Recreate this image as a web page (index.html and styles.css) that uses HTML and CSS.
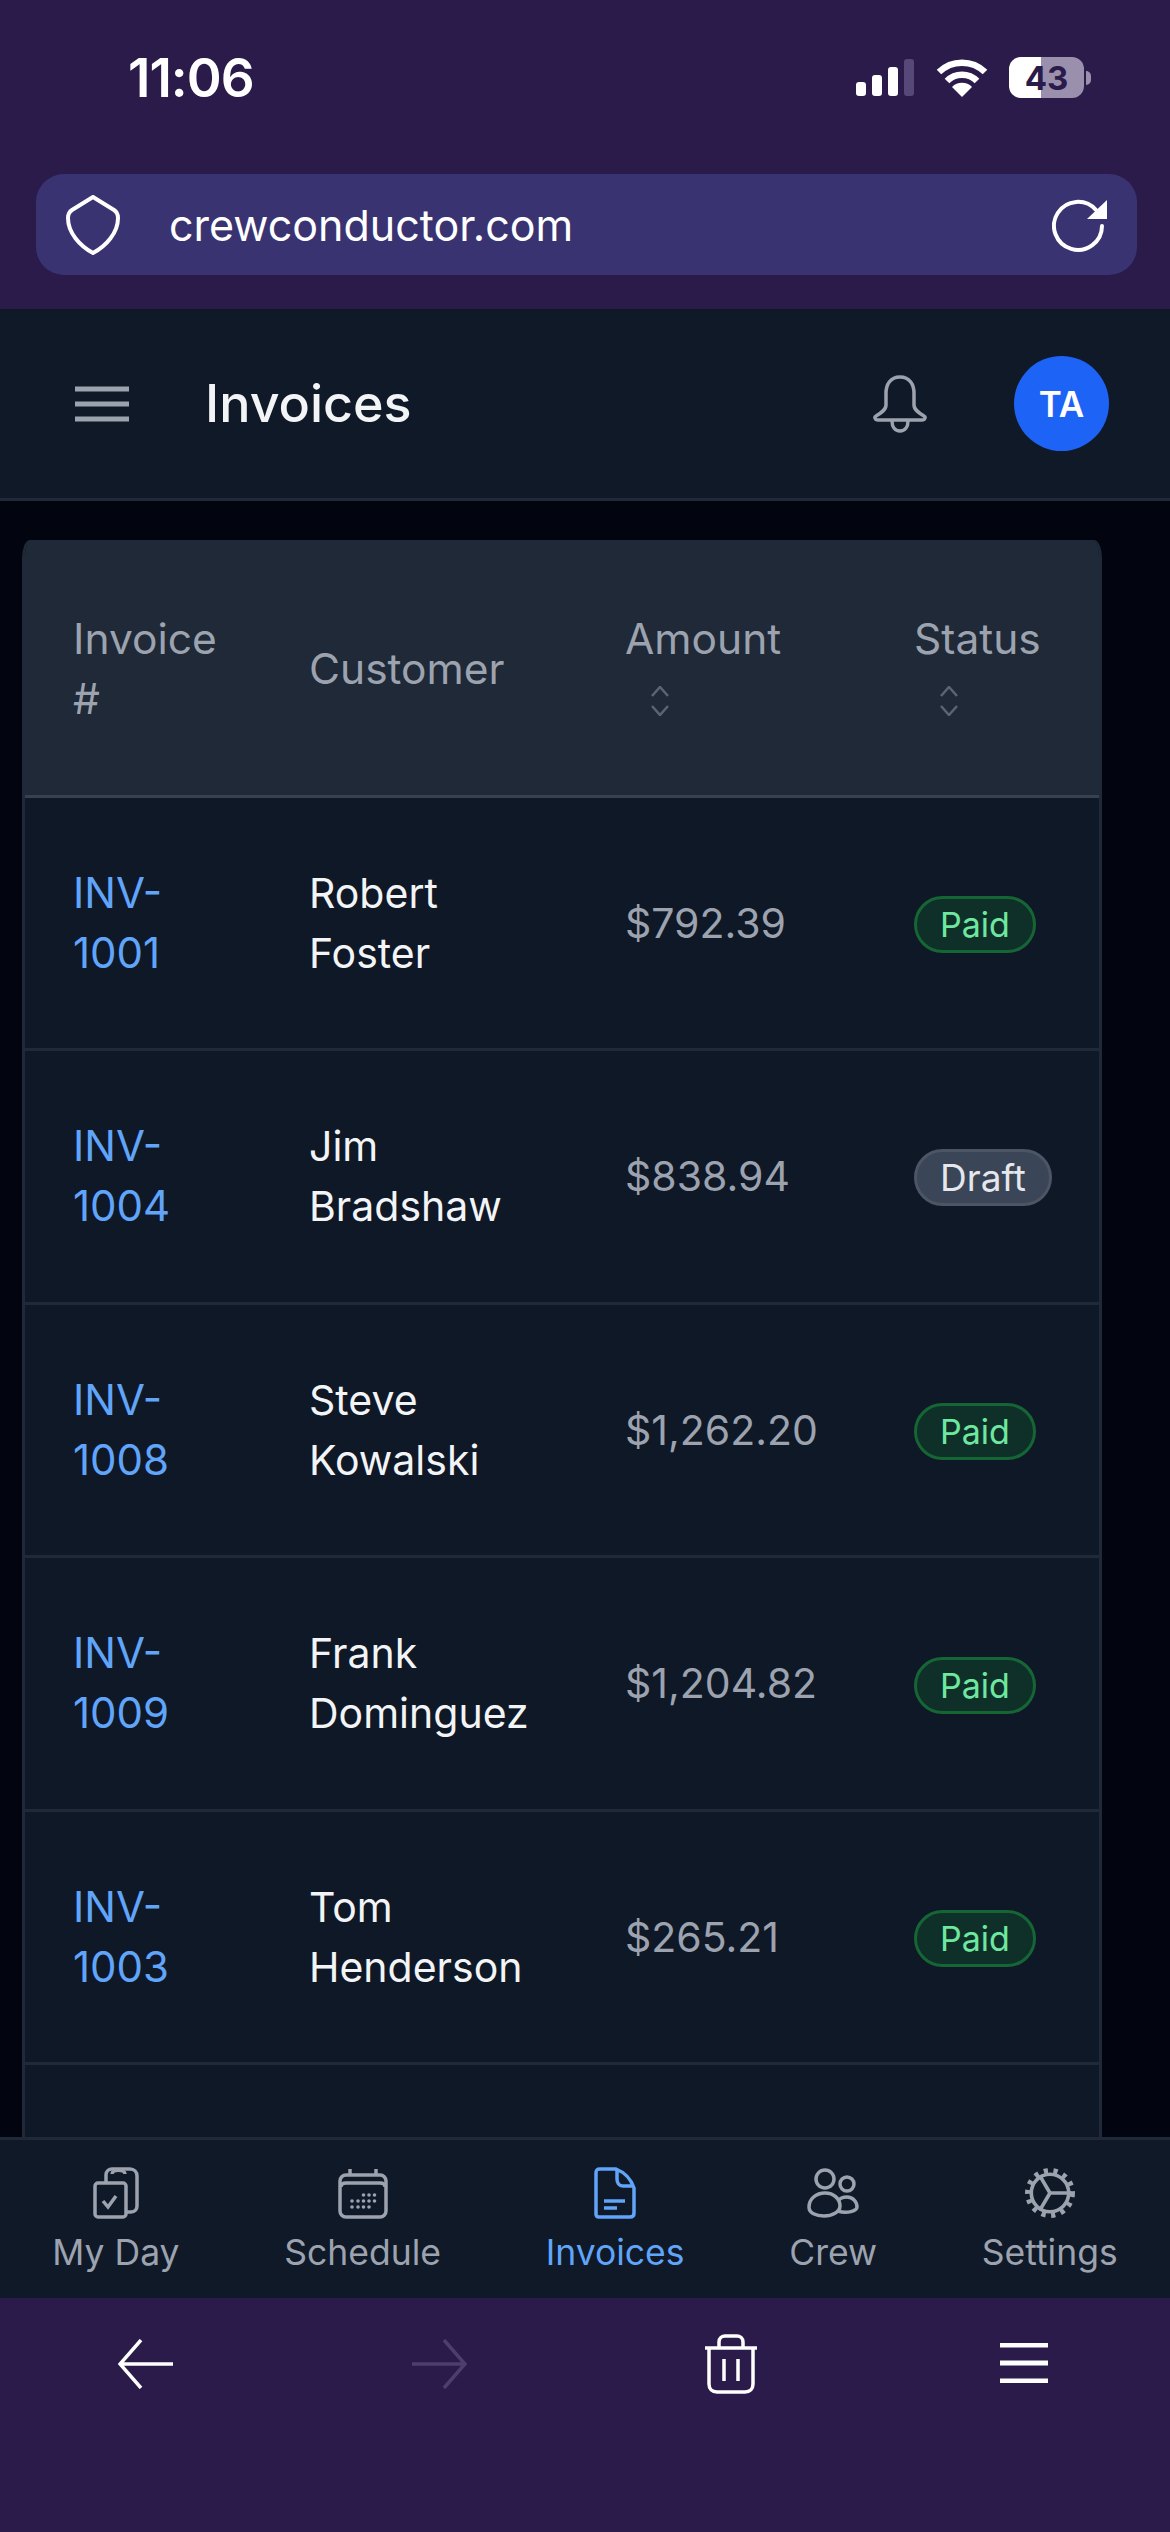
FILE: index.html
```html
<!DOCTYPE html>
<html>
<head>
    <title>Invoices</title>
    <link rel="stylesheet" href="styles.css">
</head>
<body>
    <div class="phone">
        <div class="browser-top">
            <div class="status-bar">
                <span class="time">11:06</span>
                <div class="status-icons">
                    <svg class="signal" viewBox="0 0 58 37">
                        <rect x="0" y="23" width="10" height="14" rx="3" fill="#fff"/>
                        <rect x="16" y="16" width="10" height="21" rx="3" fill="#fff"/>
                        <rect x="32" y="8" width="10" height="29" rx="3" fill="#fff"/>
                        <rect x="48" y="0" width="10" height="37" rx="3" fill="#56497a"/>
                    </svg>
                    <svg class="wifi" viewBox="0 0 52 38">
                        <path d="M3 13A33 33 0 0 1 49 13" fill="none" stroke="#fff" stroke-width="6.5"/>
                        <path d="M11 22A21 21 0 0 1 41 22" fill="none" stroke="#fff" stroke-width="6.5"/>
                        <path d="M26 38L16 28A14 14 0 0 1 36 28Z" fill="#fff"/>
                    </svg>
                    <div class="battery"><span>43</span></div>
                    <div class="battery-nub"></div>
                </div>
            </div>
            <div class="address-bar">
                <svg class="shield" viewBox="0 0 54 60">
                    <path d="M27 2L48 15C51 17 52 19 52 23C52 38 40 51 27 58C14 51 2 38 2 23C2 19 3 17 6 15Z" fill="none" stroke="#fff" stroke-width="4" stroke-linejoin="round"/>
                </svg>
                <span class="url">crewconductor.com</span>
                <svg class="reload" viewBox="0 0 56 54">
                    <path d="M44 12A24 24 0 1 0 50 28" fill="none" stroke="#fff" stroke-width="4" stroke-linecap="round"/>
                    <path d="M55 2V21H35Z" fill="#fff"/>
                </svg>
            </div>
        </div>

        <header class="app-header">
            <svg class="menu-icon" viewBox="0 0 54 36">
                <path d="M0 3H54M0 18H54M0 33H54" stroke="#9ca3af" stroke-width="5"/>
            </svg>
            <h1>Invoices</h1>
            <svg class="bell" viewBox="0 0 54 58">
                <path d="M27 2C17 2 13 10 13 18V30C13 35 8 38 3 41C1 42 2 45 5 45H49C52 45 53 42 51 41C46 38 41 35 41 30V18C41 10 37 2 27 2Z" fill="none" stroke="#9ca3af" stroke-width="3.5" stroke-linejoin="round"/>
                <path d="M19 46C19 52 22 56 27 56S35 52 35 46" fill="none" stroke="#9ca3af" stroke-width="3.5"/>
            </svg>
            <div class="avatar">TA</div>
        </header>

        <main class="content">
            <div class="table-wrap">
                <table>
                    <colgroup>
                        <col class="col-invoice">
                        <col class="col-customer">
                        <col class="col-amount">
                        <col class="col-status">
                    </colgroup>
                    <thead>
                        <tr>
                            <th>Invoice #</th>
                            <th>Customer</th>
                            <th>Amount
                                <svg class="sort" viewBox="0 0 18 30">
                                    <path d="M1 10L9 1L17 10M1 20L9 29L17 20" fill="none" stroke="#5b6572" stroke-width="2.5"/>
                                </svg>
                            </th>
                            <th>Status
                                <svg class="sort" viewBox="0 0 18 30">
                                    <path d="M1 10L9 1L17 10M1 20L9 29L17 20" fill="none" stroke="#5b6572" stroke-width="2.5"/>
                                </svg>
                            </th>
                        </tr>
                    </thead>
                    <tbody>
                        <tr>
                            <td><a href="#">INV-1001</a></td>
                            <td class="name">Robert Foster</td>
                            <td class="amount">$792.39</td>
                            <td><span class="badge paid">Paid</span></td>
                        </tr>
                        <tr>
                            <td><a href="#">INV-1004</a></td>
                            <td class="name">Jim Bradshaw</td>
                            <td class="amount">$838.94</td>
                            <td><span class="badge draft">Draft</span></td>
                        </tr>
                        <tr>
                            <td><a href="#">INV-1008</a></td>
                            <td class="name">Steve Kowalski</td>
                            <td class="amount">$1,262.20</td>
                            <td><span class="badge paid">Paid</span></td>
                        </tr>
                        <tr>
                            <td><a href="#">INV-1009</a></td>
                            <td class="name">Frank Dominguez</td>
                            <td class="amount">$1,204.82</td>
                            <td><span class="badge paid">Paid</span></td>
                        </tr>
                        <tr>
                            <td><a href="#">INV-1003</a></td>
                            <td class="name">Tom Henderson</td>
                            <td class="amount">$265.21</td>
                            <td><span class="badge paid">Paid</span></td>
                        </tr>
                        <tr>
                            <td></td>
                            <td></td>
                            <td></td>
                            <td></td>
                        </tr>
                    </tbody>
                </table>
            </div>
        </main>

        <nav class="bottom-nav">
            <a class="nav-item" href="#">
                <svg class="nav-icon" viewBox="0 0 46 52">
                    <rect x="2" y="16" width="31" height="34" rx="3"/>
                    <path d="M13 15V8C13 4 16 2 19 2H37C41 2 44 5 44 9V39C44 42 42 45 38 45H33"/>
                    <path d="M19 7C19 2 32 2 32 7" />
                    <path d="M10 34L15 40L23 29"/>
                </svg>
                <span>My Day</span>
            </a>
            <a class="nav-item" href="#">
                <svg class="nav-icon" viewBox="0 0 50 52">
                    <rect x="2" y="8" width="46" height="42" rx="6"/>
                    <path d="M3 20C3 17 5 16 8 16H42C45 16 47 17 47 20M12 2V8M38 2V8"/>
                    <g class="dots">
                        <circle cx="25.5" cy="28" r="1.8"/><circle cx="31" cy="28" r="1.8"/><circle cx="36.5" cy="28" r="1.8"/>
                        <circle cx="14" cy="34" r="1.8"/><circle cx="20" cy="34" r="1.8"/><circle cx="25.5" cy="34" r="1.8"/><circle cx="31" cy="34" r="1.8"/><circle cx="36.5" cy="34" r="1.8"/>
                        <circle cx="14" cy="40" r="1.8"/><circle cx="20" cy="40" r="1.8"/><circle cx="25.5" cy="40" r="1.8"/><circle cx="31" cy="40" r="1.8"/>
                    </g>
                </svg>
                <span>Schedule</span>
            </a>
            <a class="nav-item active" href="#">
                <svg class="nav-icon" viewBox="0 0 42 52">
                    <path d="M6 2H22C32 6 37 12 40 21V46C40 49 38 50 36 50H5C3 50 2 49 2 47V6C2 3 3 2 6 2Z"/>
                    <path d="M23 2V12C23 16 25 19 29 19H39M10 34H31M10 41H23"/>
                </svg>
                <span>Invoices</span>
            </a>
            <a class="nav-item" href="#">
                <svg class="nav-icon" viewBox="0 0 52 50">
                    <circle cx="18" cy="11" r="9"/>
                    <circle cx="40" cy="16" r="7"/>
                    <path d="M2 39C2 31 9 25 18 25C27 25 33 31 33 38C33 44 25 48 17 48C9 48 2 45 2 39Z"/>
                    <path d="M31 33C33 30 36 29 40 29C46 29 50 34 50 39C50 43 40 46 31 43"/>
                </svg>
                <span>Crew</span>
            </a>
            <a class="nav-item" href="#">
                <svg class="nav-icon" viewBox="0 0 50 50">
                    <circle cx="25" cy="25" r="18"/>
                    <circle class="teeth" cx="25" cy="25" r="21.5"/>
                    <path d="M25 25H46M25 25L15 8M25 25L15 42"/>
                </svg>
                <span>Settings</span>
            </a>
        </nav>

        <div class="browser-bottom">
            <svg class="tool-icon" viewBox="0 0 56 50">
                <path d="M23 1L2 25L23 49M3 25H55" fill="none" stroke="#fff" stroke-width="3.5"/>
            </svg>
            <svg class="tool-icon" viewBox="0 0 56 50">
                <path d="M33 1L54 25L33 49M1 25H53" fill="none" stroke="#4c3f70" stroke-width="3.5"/>
            </svg>
            <svg class="tool-icon trash" viewBox="0 0 54 60">
                <path d="M15 13V8C15 4 18 2 21 2H33C36 2 39 4 39 8V13M1 14H53M5 15V50C5 55 8 58 13 58H41C46 58 49 55 49 50V15M20 25V47M34 25V47" fill="none" stroke="#fff" stroke-width="3.5"/>
            </svg>
            <svg class="tool-icon tool-menu" viewBox="0 0 48 40">
                <path d="M0 2H48M0 20H48M0 38H48" stroke="#fff" stroke-width="5"/>
            </svg>
        </div>
    </div>
</body>
</html>
```

FILE: styles.css
```css
* {
    box-sizing: border-box;
}

body {
    margin: 0;
    font-family: Inter, "Noto Sans", sans-serif;
    background-color: #020510;
}

.phone {
    display: flex;
    flex-direction: column;
    width: 1170px;
    height: 2532px;
    overflow: hidden;
}

/* browser chrome */
.browser-top {
    flex: none;
    height: 309px;
    padding-top: 57px;
    background-color: #2a1b4a;
}

.status-bar {
    display: flex;
    align-items: center;
    justify-content: space-between;
    height: 41px;
    padding: 0 79px 0 128px;
}

.time {
    color: #fff;
    font-size: 53px;
    font-weight: 600;
    letter-spacing: -1px;
}

.status-icons {
    display: flex;
    align-items: center;
}

.signal {
    width: 58px;
    height: 37px;
    margin-right: 22px;
}

.wifi {
    width: 52px;
    height: 38px;
    margin-right: 21px;
}

.battery {
    display: flex;
    align-items: center;
    justify-content: center;
    width: 75px;
    height: 41px;
    border-radius: 12px;
    background: linear-gradient(to right, #fff 43%, #9a90ae 43%);
    color: #2a1b4a;
    font-size: 33px;
    font-weight: 700;
}

.battery-nub {
    width: 5px;
    height: 14px;
    margin-left: 2px;
    border-radius: 0 5px 5px 0;
    background-color: #9a90ae;
}

.address-bar {
    display: flex;
    align-items: center;
    height: 101px;
    margin: 76px 33px 0 36px;
    padding: 0 29px 0 30px;
    border-radius: 28px;
    background-color: #3a3372;
}

.shield {
    width: 54px;
    height: 60px;
}

.url {
    flex: 1;
    margin-left: 49px;
    color: #fff;
    font-size: 43px;
}

.reload {
    width: 56px;
    height: 54px;
}

/* app header */
.app-header {
    flex: none;
    display: flex;
    align-items: center;
    height: 192px;
    padding: 0 61px 0 75px;
    border-bottom: 3px solid #1f2937;
    background-color: #101927;
}

.menu-icon {
    width: 54px;
    height: 36px;
}

.app-header h1 {
    flex: 1;
    margin: 0 0 0 76px;
    color: #f3f4f6;
    font-size: 52px;
    font-weight: 500;
}

.bell {
    width: 54px;
    height: 58px;
    margin-right: 87px;
}

.avatar {
    display: flex;
    align-items: center;
    justify-content: center;
    width: 95px;
    height: 95px;
    border-radius: 50%;
    background-color: #1d63f5;
    color: #fff;
    font-size: 35px;
    font-weight: 600;
}

/* invoices table */
.content {
    flex: 1;
    min-height: 0;
    padding: 39px 0 0 22px;
    overflow: hidden;
}

.table-wrap {
    width: 1080px;
    border: 3px solid #1f2937;
    border-top: 0;
    border-radius: 8px 8px 0 0 / 18px 18px 0 0;
    overflow: hidden;
    background-color: #0f1827;
}

table {
    width: 100%;
    table-layout: fixed;
    border-collapse: collapse;
}

.col-invoice { width: 236px; }
.col-customer { width: 316px; }
.col-amount { width: 289px; }
.col-status { width: 233px; }

th, td {
    padding: 0 40px 0 48px;
    text-align: left;
    vertical-align: middle;
    font-size: 41px;
    font-weight: 400;
    line-height: 60px;
}

th {
    height: 256px;
    padding-top: 3px;
    border-bottom: 3px solid #374151;
    background-color: #1f2937;
    color: #9ca3af;
    font-size: 42.5px;
}

td {
    height: 253.5px;
    border-bottom: 3px solid #1f2937;
}

td a {
    color: #60a5fa;
    font-size: 42px;
    text-decoration: none;
}

.name {
    color: #f3f4f6;
}

.amount {
    color: #9ca3af;
}

.sort {
    display: block;
    width: 18px;
    height: 30px;
    margin: 17px 0 13px 26px;
}

.badge {
    display: inline-block;
    padding: 0 23px;
    border-radius: 29px;
    border: 3px solid;
    line-height: 51px;
}

.paid {
    border-color: #166534;
    background-color: #0e3029;
    color: #6ee7a0;
    font-size: 34px;
}

.draft {
    border-color: #4b5563;
    background-color: #3a4558;
    color: #e5e7eb;
    font-size: 37px;
}

/* bottom nav */
.bottom-nav {
    flex: none;
    display: flex;
    justify-content: space-around;
    height: 161px;
    padding-top: 27px;
    border-top: 3px solid #1f2937;
    background-color: #101927;
}

.nav-item {
    display: flex;
    flex-direction: column;
    align-items: center;
    color: #9ca3af;
    font-size: 35.5px;
    line-height: 52px;
    text-decoration: none;
}

.nav-item.active {
    color: #60a5fa;
}

.nav-icon {
    width: 52px;
    height: 52px;
    margin-bottom: 8px;
    fill: none;
    stroke: currentColor;
    stroke-width: 3.5;
}

.nav-icon .dots {
    fill: currentColor;
    stroke: none;
}

.nav-icon .teeth {
    stroke-width: 5;
    stroke-dasharray: 4 5.46;
}

.browser-bottom {
    flex: none;
    display: grid;
    grid-template-columns: repeat(4, 1fr);
    justify-items: center;
    align-items: start;
    height: 234px;
    padding-top: 41px;
    background-color: #2a1b4a;
}

.tool-icon {
    width: 56px;
    height: 50px;
}

.trash {
    height: 60px;
    margin-top: -5px;
}

.tool-menu {
    width: 48px;
    height: 40px;
    margin-top: 4px;
}
```
